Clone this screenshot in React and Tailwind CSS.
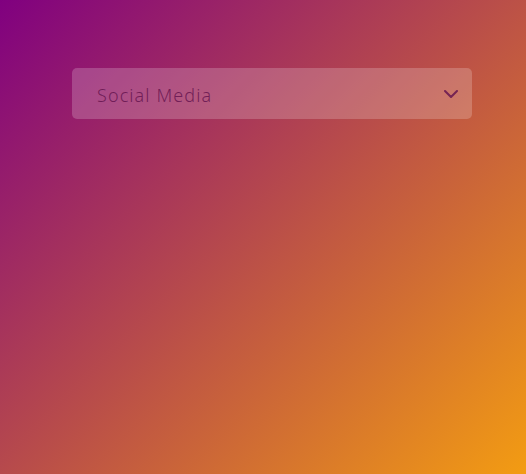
import React from 'react';

const App = () => {
  return (
    <div className="w-[526px] h-[474px] bg-[linear-gradient(135deg,#800080_0%,#f39c12_100%)] pt-[68px] pl-[72px]" style={{ fontFamily: '"Noto Sans", sans-serif' }}>
      <div className="w-[400px] h-[51px] rounded-[5px] bg-white/20 flex items-center justify-between pl-[25px] pr-[14px]">
        <span className="text-[18px] font-light text-[#661550]/85 tracking-[1.1px] pt-[3px]">Social Media</span>
        <svg width="14" height="8" viewBox="0 0 14 8" fill="none" stroke="#661550" strokeOpacity="0.85" strokeWidth="2" strokeLinecap="round" strokeLinejoin="round">
          <path d="M1 1l6 6 6-6" />
        </svg>
      </div>
    </div>
  );
};

export default App;
